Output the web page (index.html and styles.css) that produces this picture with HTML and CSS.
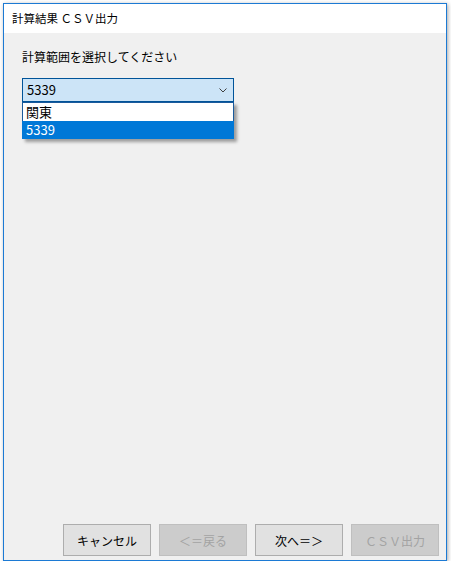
FILE: index.html
```html
<!DOCTYPE html>
<html lang="ja">
<head>
<meta charset="utf-8">
<title>計算結果 ＣＳＶ出力</title>
<link rel="stylesheet" href="styles.css">
</head>
<body>
<div class="window">
  <div class="titlebar">計算結果 ＣＳＶ出力</div>
  <div class="content">
    <div class="label">計算範囲を選択してください</div>
    <div class="combo-wrap">
      <div class="combo">
        <span class="combo-value">5339</span>
        <svg class="chev" width="8" height="5" viewBox="0 0 8 5"><path d="M0.5 0.5 L4 4 L7.5 0.5" fill="none" stroke="#404040" stroke-width="1"/></svg>
      </div>
      <ul class="droplist">
        <li class="item">関東</li>
        <li class="item selected">5339</li>
      </ul>
    </div>
    <div class="spacer"></div>
    <div class="buttons">
      <button class="btn">キャンセル</button>
      <button class="btn disabled">＜＝戻る</button>
      <button class="btn">次へ＝＞</button>
      <button class="btn disabled">ＣＳＶ出力</button>
    </div>
  </div>
</div>
</body>
</html>
```

FILE: styles.css
```css
html, body {
  margin: 0;
  padding: 0;
  background: #ffffff;
}
body {
  font-family: "Noto Sans CJK JP", "Noto Sans", sans-serif;
  font-size: 12px;
  color: #000;
}
.window {
  margin: 3px 0 0 3px;
  width: 444px;
  height: 558px;
  box-sizing: border-box;
  border: 1px solid #1c7ad4;
  box-shadow: 1px 1px 4px rgba(0,0,0,0.35);
  display: flex;
  flex-direction: column;
  background: #f0f0f0;
}
.titlebar {
  height: 29px;
  background: #ffffff;
  padding-left: 8px;
  font-size: 11.5px;
  line-height: 29px;
  flex: none;
}
.content {
  flex: 1;
  display: flex;
  flex-direction: column;
  padding: 15px 7px 4px 18px;
}
.label {
  font-size: 12px;
  line-height: 18px;
  height: 18px;
}
.combo-wrap {
  position: relative;
  margin-top: 12px;
  width: 212px;
}
.combo {
  box-sizing: border-box;
  width: 212px;
  height: 24px;
  background: #cce4f7;
  border: 1px solid #005499;
  display: flex;
  align-items: center;
  justify-content: space-between;
  padding: 0 6px 0 4px;
}
.combo-value {
  font-size: 13px;
  line-height: 22px;
}
.chev {
  display: block;
  margin-top: 1px;
}
.droplist {
  position: absolute;
  left: 0;
  top: 24px;
  width: 212px;
  box-sizing: border-box;
  margin: 0;
  padding: 0;
  list-style: none;
  border: 1px solid #1a5a9c;
  border-bottom: none;
  background: #ffffff;
  box-shadow: 3px 3px 3px rgba(0,0,0,0.35);
}
.item {
  height: 18px;
  line-height: 18px;
  padding-left: 3px;
  font-size: 13px;
}
.item.selected {
  background: #0078d7;
  color: #ffffff;
  margin: 0 -1px;
  padding-left: 4px;
}
.spacer {
  flex: 1;
}
.buttons {
  display: flex;
  justify-content: flex-end;
  gap: 8px;
}
.btn {
  width: 88px;
  height: 32px;
  box-sizing: border-box;
  background: #e1e1e1;
  border: 1px solid #adadad;
  font-family: "Noto Sans CJK JP", "Noto Sans", sans-serif;
  font-size: 12px;
  color: #000;
  padding: 0;
  margin: 0;
}
.btn.disabled {
  background: #cccccc;
  border-color: #bfbfbf;
  color: #a3a3a3;
}
```
